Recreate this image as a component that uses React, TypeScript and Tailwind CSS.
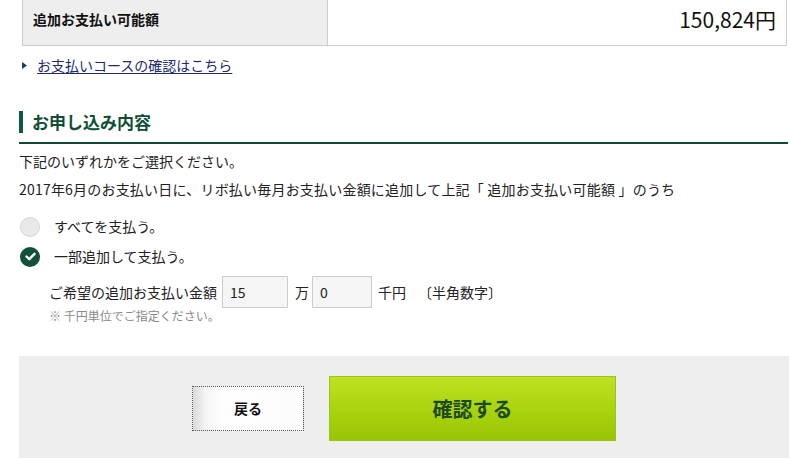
const font = '[font-family:Meiryo,"Noto_Sans_CJK_JP","Noto_Sans",sans-serif]';

const Radio = ({ checked }: { checked?: boolean }) =>
    checked ? (
        <span className="flex h-[20px] w-[20px] items-center justify-center rounded-full bg-[#11513a]">
            <svg width="11" height="9" viewBox="0 0 11 9">
                <path d="M1.5 4.5 L4.3 7.2 L9.5 1.8" fill="none" stroke="#fff" strokeWidth="2.4" strokeLinecap="round" strokeLinejoin="round" />
            </svg>
        </span>
    ) : (
        <span className="h-[20px] w-[20px] rounded-full border border-[#d4d4d4] bg-[#e9e9e9]" />
    );

export default function App() {
    return (
        <div className={`${font} min-h-[458px] w-[791px] overflow-hidden bg-white text-[14px] text-[#222]`}>
            {/* 追加お支払い可能額 row */}
            <div className="ml-[22px] flex h-[46px] w-[765px] border-x border-b border-[#cccccc]">
                <div className="flex w-[305px] items-center border-r border-[#cccccc] bg-[#eeeeee] pb-[6px] pl-[10px] font-bold text-[#111]">
                    追加お支払い可能額
                </div>
                <div className="flex flex-1 items-center justify-end pb-[6px] pr-[10px] text-[21px] text-[#111]">
                    150,824円
                </div>
            </div>

            <div className="ml-[22px] mt-[9px] flex items-center gap-[10px] leading-[20px]">
                <svg width="5" height="7" viewBox="0 0 5 7">
                    <path d="M0 0 L5 3.5 L0 7 Z" fill="#1d3b6a" />
                </svg>
                <a className="text-[#1d2a6b] underline underline-offset-2">お支払いコースの確認はこちら</a>
            </div>

            {/* お申し込み内容 */}
            <div className="ml-[19px] mt-[36px] w-[769px] border-b-2 border-[#0f4a33] pb-[9px]">
                <div className="flex items-center gap-[9px]">
                    <span className="h-[22px] w-[4px] bg-[#0f5a3c]" />
                    <h2 className="text-[17px] font-bold leading-[22px] text-[#0f4f36]">お申し込み内容</h2>
                </div>
            </div>

            <div className="ml-[19px] mt-[3px] leading-[28px]">
                <p>下記のいずれかをご選択ください。</p>
                <p className="tracking-[0.2px]">2017年6月のお支払い日に、リボ払い毎月お支払い金額に追加して上記「 追加お支払い可能額 」のうち</p>
            </div>

            <div className="ml-[20px] mt-[13px] flex flex-col gap-[9px]">
                <label className="flex items-center gap-[14px] leading-[21px]">
                    <Radio />
                    すべてを支払う。
                </label>
                <label className="flex items-center gap-[14px] leading-[21px]">
                    <Radio checked />
                    一部追加して支払う。
                </label>
            </div>

            <div className="ml-[49px] mt-[9px]">
                <div className="flex items-center">
                    <span>ご希望の追加お支払い金額</span>
                    <input
                        readOnly
                        value="15"
                        className="ml-[5px] h-[32px] w-[66px] border border-[#cccccc] bg-[#f5f5f5] px-[7px] text-[14px] outline-none"
                    />
                    <span className="ml-[7px]">万</span>
                    <input
                        readOnly
                        value="0"
                        className="ml-[3px] h-[32px] w-[60px] border border-[#cccccc] bg-[#f5f5f5] px-[7px] text-[14px] outline-none"
                    />
                    <span className="ml-[6px]">千円</span>
                    <span className="ml-[12px]">〔半角数字〕</span>
                </div>
                <p className="text-[12px] leading-[16px] text-[#8a8a8a]">※ 千円単位でご指定ください。</p>
            </div>

            {/* buttons */}
            <div className="ml-[19px] mt-[32px] flex h-[110px] w-[770px] items-start gap-[25px] bg-[#eeeeee] pl-[173px] pt-[20px]">
                <button className="mt-[10px] flex h-[45px] w-[112px] items-center justify-center border border-dotted border-[#555] bg-[linear-gradient(90deg,#d9d9d9_0%,#f6f6f6_12%,#ffffff_30%,#fbfbfb_100%)] text-[14px] font-bold text-[#111]">
                    戻る
                </button>
                <button className="flex h-[65px] w-[287px] items-center justify-center border border-[#9fc21a] bg-[linear-gradient(180deg,#bfe222_0%,#a9d40e_50%,#98c504_100%)] text-[20px] font-bold text-[#1b4a24]">
                    確認する
                </button>
            </div>
        </div>
    );
}
